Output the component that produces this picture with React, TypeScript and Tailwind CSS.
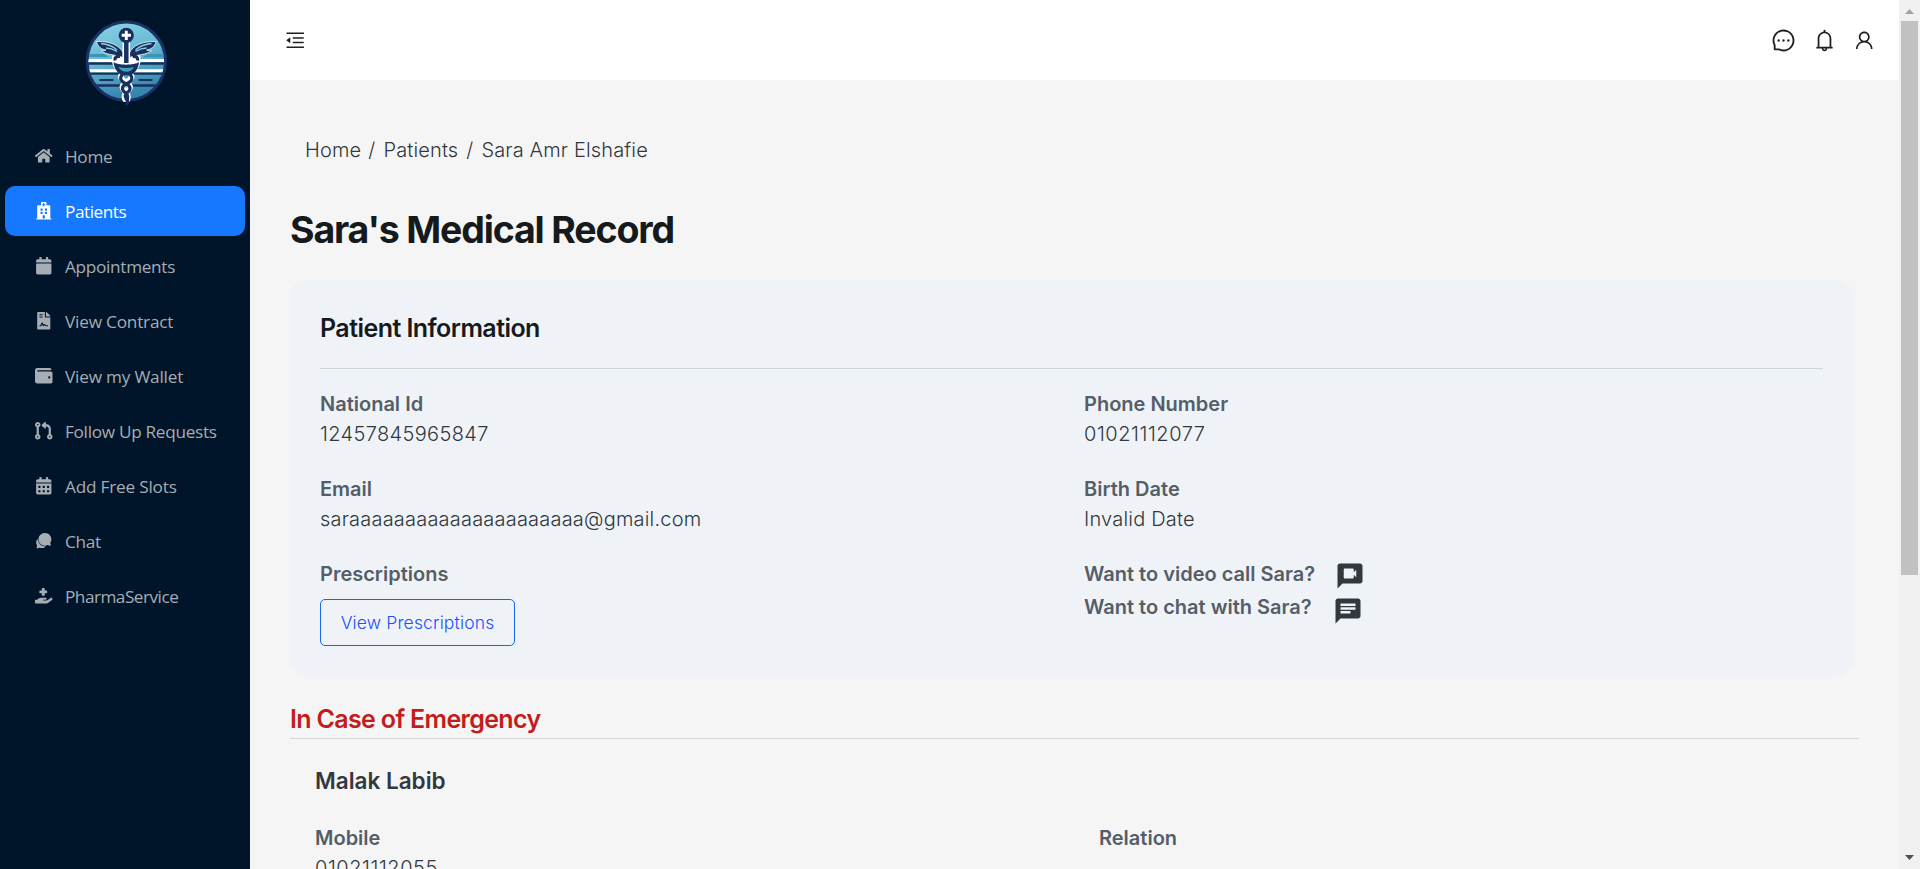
import type { ReactNode } from "react";
import { FaHome, FaHospital, FaCalendar, FaFileContract, FaWallet, FaCalendarAlt, FaHandHoldingMedical } from "react-icons/fa";
import { FaCodePullRequest } from "react-icons/fa6";
import { IoChatbubbles } from "react-icons/io5";
import { AiOutlineMenuFold, AiOutlineMessage, AiOutlineBell, AiOutlineUser } from "react-icons/ai";
import { MdVideoChat, MdChat } from "react-icons/md";

type MenuEntry = { label: string; icon: ReactNode; tracking: string; active?: boolean };

const menu: MenuEntry[] = [
  { label: "Home", icon: <FaHome />, tracking: "tracking-[-0.3px]" },
  { label: "Patients", icon: <FaHospital />, tracking: "tracking-[-0.45px]", active: true },
  { label: "Appointments", icon: <FaCalendar />, tracking: "tracking-[-0.3px]" },
  { label: "View Contract", icon: <FaFileContract />, tracking: "tracking-[-0.2px]" },
  { label: "View my Wallet", icon: <FaWallet />, tracking: "tracking-[-0.2px]" },
  { label: "Follow Up Requests", icon: <FaCodePullRequest />, tracking: "tracking-[-0.3px]" },
  { label: "Add Free Slots", icon: <FaCalendarAlt />, tracking: "tracking-[-0.2px]" },
  { label: "Chat", icon: <IoChatbubbles />, tracking: "tracking-[-0.3px]" },
  { label: "PharmaService", icon: <FaHandHoldingMedical />, tracking: "tracking-[-0.5px]" },
];

function Logo() {
  return (
    <svg viewBox="0 0 110 100" className="h-[100px] w-[110px]">
      <defs>
        <linearGradient id="disc" x1="0" y1="0" x2="0.3" y2="1">
          <stop offset="0" stopColor="#8fd3e6" />
          <stop offset="0.5" stopColor="#66b9d3" />
          <stop offset="1" stopColor="#3585ad" />
        </linearGradient>
        <clipPath id="inner"><circle cx="56.3" cy="51.3" r="37.8" /></clipPath>
      </defs>
      <circle cx="56.3" cy="51.3" r="39.2" fill="url(#disc)" stroke="#1b3268" strokeWidth="3" />
      <g clipPath="url(#inner)">
        <path d="M17 44h17l5 3H17zM95 44H78l-5 3h22z" fill="#3d93b5" />
        <path d="M17 50.7h29M66 50.7h30M17 60.8h31M64 60.8h32" stroke="#fff" strokeWidth="3.2" />
        <path d="M17 53.5h28M67 53.5h29M17 63.6h32M63 63.6h33M17 75.5h33M62 75.5h34" stroke="#17305f" strokeWidth="2.3" />
        <path d="M29.5 70h14M68.5 70h14" stroke="#17305f" strokeWidth="1.8" />
      </g>
      <g stroke="#fff" strokeWidth="6" strokeLinecap="round" strokeLinejoin="round" fill="#fff">
        <path d="M45 47c-1 7 3 14 11.3 15.5C64.5 61 68.5 54 67.5 47" />
        <path d="M51 66c-1 5 9 7 9 11s-7 5-5 12M61.5 66c1 5-9 7-9 11s7 5 5 12" fill="none" />
      </g>
      <path d="M53 42.5C50 36 41 31 26.5 31.5c1 5 5 8 9.5 8.5-2 1-3 1-5 .5 4 4.5 15 4 22 7zM59.6 42.5c3-6.5 12-11.5 26.5-11-1 5-5 8-9.5 8.5 2 1 3 1 5 .5-4 4.5-15 4-22 7z" fill="#17305f" stroke="#d7eef4" strokeWidth="0.9" />
      <path d="M31 33.5c6 .5 12 3 16 6.5M36 38c4 0 7 1 11 3.5M81.5 33.5c-6 .5-12 3-16 6.5M76.5 38c-4 0-7 1-11 3.5" stroke="#8fcfe2" strokeWidth="1.3" fill="none" />
      <path d="M56.3 32v22" stroke="#fff" strokeWidth="7.5" />
      <path d="M56.3 30v23" stroke="#17305f" strokeWidth="4.5" />
      <circle cx="56.3" cy="25.3" r="7.6" fill="#17305f" />
      <path d="M56.3 20.7v9.2M51.7 25.3h9.2" stroke="#fff" strokeWidth="2.9" />
      <path d="M50 46.5c-4-.5-5.5 1-5 4M62.6 46.5c4-.5 5.5 1 5 4" stroke="#17305f" strokeWidth="3.2" fill="none" />
      <path d="M43.5 52c4 3.5 21 3.5 25.5 0-.5 7-4.5 12-9.5 13.5h-6.5C48 64 44 59 43.5 52z" fill="#17305f" />
      <path d="M48.5 57c5 1.3 11 1.3 15.5 0-1.5 3-4 4.8-7.7 4.8S50 60 48.5 57z" fill="#3f9dbd" />
      <path d="M52.5 64c-4.5 6 0 8 4 10s5 5.5 1 8.5-2 4.5-.5 8M60 64c4.5 6 0 8-4 10s-5 5.5-1 8.5 2.5 4.5 2 12.5" stroke="#17305f" strokeWidth="3.2" fill="none" />
    </svg>
  );
}

function Sidebar() {
  return (
    <aside className="flex w-[250px] shrink-0 flex-col bg-[#001529]">
      <div className="ml-[70px] mt-[10px] h-[100px]"><Logo /></div>
      <nav className="mt-[21px] flex flex-col gap-[5px] px-[5px]">
        {menu.map((m) => (
          <a
            key={m.label}
            className={`flex h-[50px] items-center rounded-[10px] pl-[30px] font-['Open_Sans',sans-serif] text-[17.2px] ${m.tracking} ${m.active ? "bg-[#1677ff] text-white" : "text-[#a6adb4]"}`}
          >
            <span className="mr-[12.5px] text-[17.5px]">{m.icon}</span>
            <span className="whitespace-nowrap pt-px">{m.label}</span>
          </a>
        ))}
      </nav>
    </aside>
  );
}

function Field({ label, value, valueTracking = "tracking-[0.2px]" }: { label: string; value: string; valueTracking?: string }) {
  return (
    <div className="h-[85px] text-[20px] leading-[30px]">
      <div className="font-semibold text-[#555e68]">{label}</div>
      <div className={`font-light text-[#32383e] ${valueTracking}`}>{value}</div>
    </div>
  );
}

function Scrollbar() {
  return (
    <div className="flex w-[21px] shrink-0 flex-col items-center justify-between bg-[#f1f1f1]">
      <div className="flex flex-col items-center">
        <svg viewBox="0 0 21 21" className="h-[21px] w-[21px]"><path d="M6 14h9l-4.5-5z" fill="#a3a3a3" /></svg>
        <div className="h-[554px] w-[17px] bg-[#c1c1c1]" />
      </div>
      <svg viewBox="0 0 21 21" className="h-[21px] w-[21px]"><path d="M6 7h9l-4.5 5z" fill="#505050" /></svg>
    </div>
  );
}

export default function App() {
  return (
    <div className="flex h-[869px] w-[1920px] overflow-hidden bg-[#f5f5f5] font-['Inter',sans-serif]">
      <Sidebar />
      <div className="flex min-w-0 flex-1 flex-col overflow-hidden">
        <header className="flex h-[80px] shrink-0 items-center bg-white pl-[34px] pr-[24px] text-[#1f1f1f]">
          <AiOutlineMenuFold className="text-[22.5px]" />
          <div className="ml-auto flex items-center">
            <AiOutlineMessage className="text-[25px]" />
            <AiOutlineBell className="ml-[16px] text-[25px]" />
            <AiOutlineUser className="ml-[16px] text-[22.5px]" />
          </div>
        </header>
        <main className="flex flex-col px-[40px]">
          <nav className="mt-[55px] flex h-[30px] gap-[8px] pl-[15px] text-[20px] font-light leading-[30px] tracking-[0.15px] text-[#32383e]">
            <span>Home</span><span className="-ml-px">/</span><span>Patients</span><span>/</span><span>Sara Amr Elshafie</span>
          </nav>
          <h1 className="mt-[40px] h-[50px] text-[37.5px] font-bold leading-[50px] tracking-[-1.16px] text-[#171a1c]">Sara's Medical Record</h1>
          <section className="mr-[6px] mt-[25px] h-[396px] rounded-[16px] bg-[#eff3f8] px-[30px] pt-[32px]">
            <h2 className="h-[57px] border-b border-[#d0d5da] text-[25px] font-semibold leading-[32px] tracking-[-0.55px] text-[#171a1c]">Patient Information</h2>
            <div className="mt-[20px] grid grid-cols-[764px_1fr]">
              <div>
                <Field label="National Id" value="12457845965847" valueTracking="tracking-[0.35px]" />
                <Field label="Email" value="saraaaaaaaaaaaaaaaaaaaaa@gmail.com" />
                <div className="text-[20px] font-semibold leading-[30px] text-[#555e68]">Prescriptions</div>
                <button className="mt-[10px] h-[47px] w-[195px] rounded-[5px] border border-[#1766ef] pt-px text-[17.5px] font-light tracking-[0.15px] text-[#2050fa]">View Prescriptions</button>
              </div>
              <div>
                <Field label="Phone Number" value="01021112077" valueTracking="tracking-[0.55px]" />
                <Field label="Birth Date" value="Invalid Date" />
                <div className="text-[20px] font-semibold leading-[30px] text-[#555e68]">
                  <div className="flex h-[33px]">Want to video call Sara?<MdVideoChat className="ml-[20px] mt-[2px] text-[30px] text-[#32383e]" /></div>
                  <div className="flex h-[33px]">Want to chat with Sara?<MdChat className="ml-[21px] mt-[4px] text-[30px] text-[#32383e]" /></div>
                </div>
              </div>
            </div>
          </section>
          <h2 className="mt-[27px] h-[36px] border-b border-[#d6d6d6] text-[25px] font-semibold leading-[32px] tracking-[-0.66px] text-[#c41c1c]">In Case of Emergency</h2>
          <div className="pl-[25px]">
            <h3 className="mt-[26px] text-[22.5px] font-semibold leading-[32px] text-[#32383e]">Malak Labib</h3>
            <div className="mt-[26px] grid grid-cols-[784px_1fr]">
              <Field label="Mobile" value="01021112055" valueTracking="tracking-[0.55px]" />
              <Field label="Relation" value="" />
            </div>
          </div>
        </main>
      </div>
      <Scrollbar />
    </div>
  );
}
